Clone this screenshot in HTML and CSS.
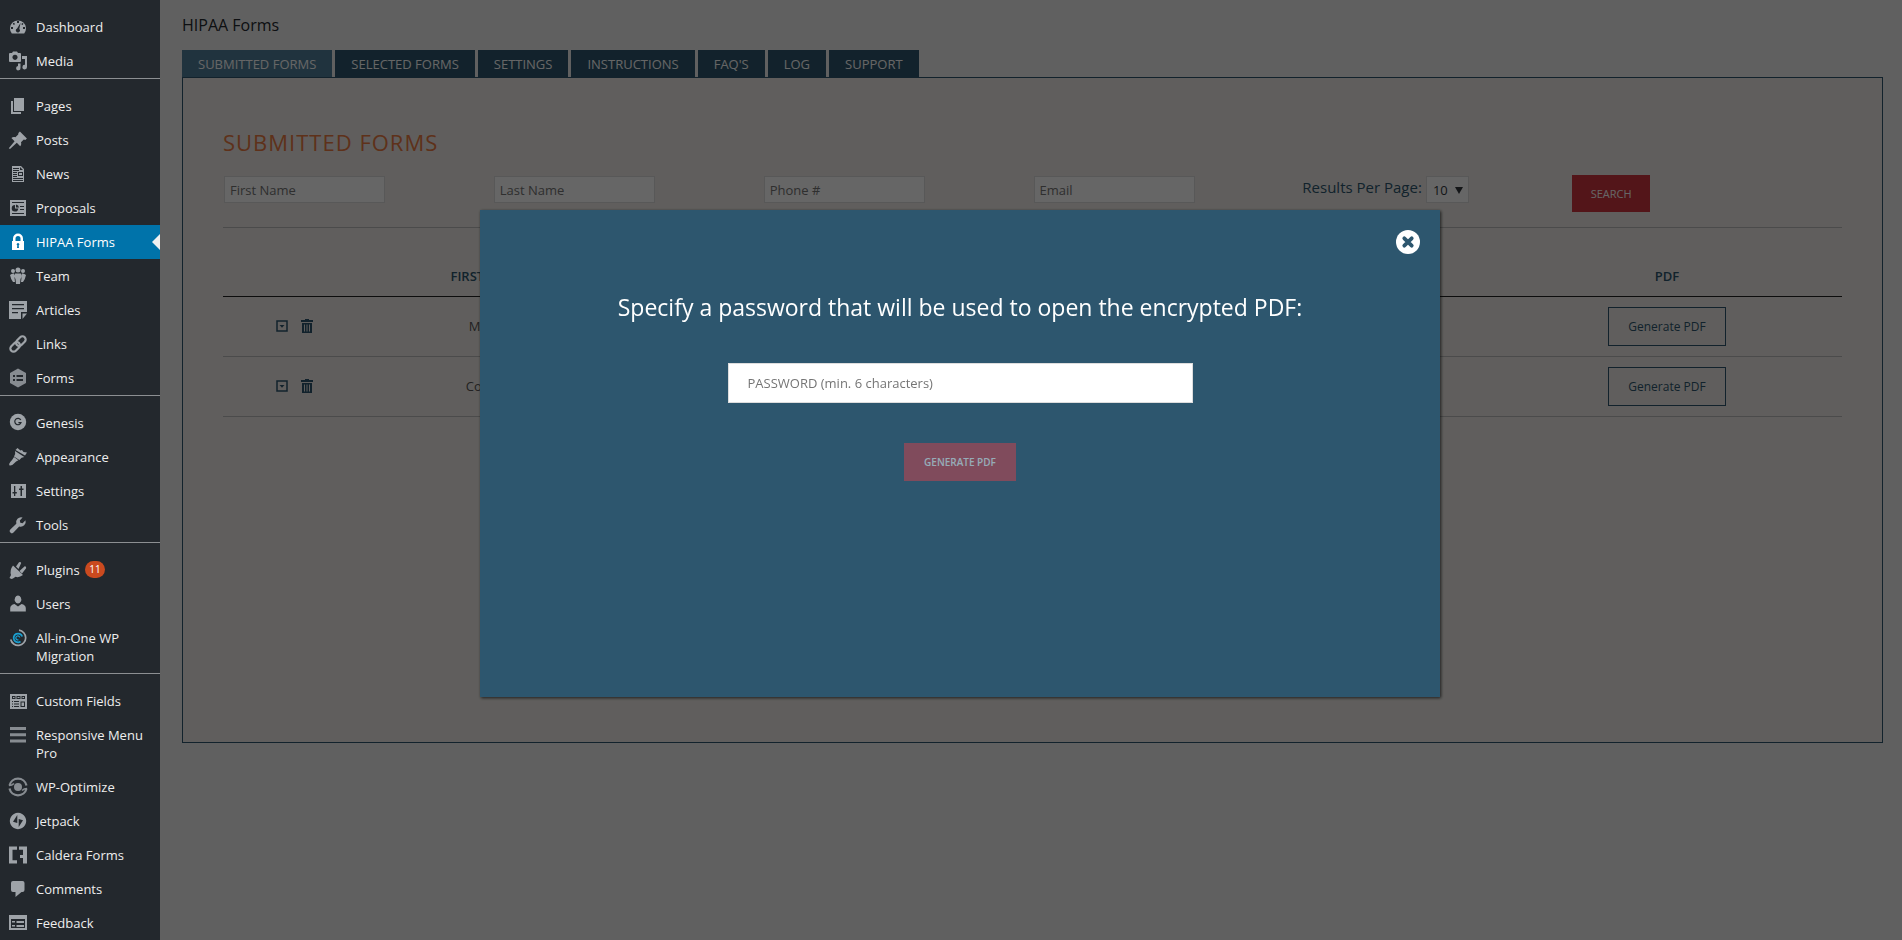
FILE: index.html
```
<!DOCTYPE html>
<html lang="en">
    <head>
        <title>HIPAA Forms</title>
        <meta charset="UTF-8">
        <meta name="viewport" content="width=device-width, initial-scale=1.0">
        <link rel="stylesheet" href="styles.css">
    </head>
    <body>
        <nav class="sidebar">
            <ul class="menu">
                <li><a href="#"><svg class="icon" viewBox="0 0 20 20"><path fill-rule="evenodd" d="M3.800 16.500h12.400A8 8 0 1 0 3.800 16.500zM9 4h2v2H9zM4.800 6.200l1.400-.4.800 1.400-1.400.8zM3 10h2v2H3zM15 10h2v2h-2zM14 6l1.400.6-.6 1.400-1.400-.6zM12.600 5.800L11.300 12a2 2 0 1 1-2.200-.4z"/></svg>Dashboard</a></li>
                <li><a href="#"><svg class="icon" viewBox="0 0 20 20"><path fill-rule="evenodd" d="M2 2h2l1-1.500h4L10 2h2q1 0 1 1v7q0 1-1 1H2q-1 0-1-1V3q0-1 1-1zM7 3.700a2.600 2.600 0 1 0 .01 0z"/><path d="M14 5h5v11a2.300 2.300 0 1 1-2-2.200V8h-3zM10 12.500h2.500v4.500a2.200 2.200 0 1 1-2.500-2z"/></svg>Media</a></li>
                <li class="separator"></li>
                <li><a href="#"><svg class="icon" viewBox="0 0 20 20"><path d="M6 2h10v13H6z"/><path d="M3 5h2v11h8v2H3z"/></svg>Pages</a></li>
                <li><a href="#"><svg class="icon" viewBox="0 0 20 20"><path d="M10.400 3l1.500-1.600 7 7-1.600 1.500-1.500-.4-2.800 2.800c.5 1.600.2 3-.8 4l-3.400-3.500L2 19l-1.200-.8 5.800-7L3.400 8c1-1 2.500-1.300 4-.8l2.800-2.800z"/></svg>Posts</a></li>
                <li><a href="#"><svg class="icon" viewBox="0 0 20 20"><path fill-rule="evenodd" d="M4 2h9l3 3v13H4zM5 4v1h6V4zM5 6v1h6V6zM12 3v3h3zM5 8v1h4V8zM10 8v4h5V8zM11 9h3v2h-3zM5 10v1h4v-1zM5 12v1h4v-1zM5 14v1h10v-1zM5 16v1h10v-1z"/></svg>News</a></li>
                <li><a href="#"><svg class="icon" viewBox="0 0 20 20"><path fill-rule="evenodd" d="M2 2h16v16H2zM4 4v1h12V4zM7 7a3.300 3.300 0 1 0 3.300 3.500H7zM8 6.500v3h3q-.3-2.700-3-3zM12 8v1h4V8zM12 11v1h4v-1zM4 15v1h12v-1z"/></svg>Proposals</a></li>
                <li class="current"><a href="#"><svg class="icon" viewBox="0 0 20 20"><path fill-rule="evenodd" d="M5 9V6.500a5 5 0 0 1 10 0V9h1v9H4V9zM7.500 9h5V6.500a2.500 2.500 0 0 0-5 0zM9.300 13.500L9 16h2l-.3-2.500a1.300 1.300 0 1 0-1.400 0z"/></svg>HIPAA Forms</a></li>
                <li><a href="#"><svg class="icon" viewBox="0 0 20 20"><circle cx="5" cy="5" r="2"/><circle cx="10" cy="4" r="2.500"/><circle cx="15" cy="5" r="2"/><path d="M2 9q2-2 4-1.500L7 16H5q-2-2-3-7zM18 9q-2-2-4-1.500L13 16h2q2-2 3-7zM7 7.500h6L14 10l-1.500 3-.5 5H8l-.5-5L6 10z"/></svg>Team</a></li>
                <li><a href="#"><svg class="icon" viewBox="0 0 20 20"><path fill-rule="evenodd" d="M1 1h18v11h-6v7H1zM4 4v1.300h12V4zM4 8v1.300h12V8zM4 12v1.300h6V12z"/><path d="M14.500 13.500H19L14.500 19z"/></svg>Articles</a></li>
                <li><a href="#"><svg class="icon" viewBox="0 0 20 20"><g transform="rotate(-45 10 10)" fill="none" stroke="#9ea3a8" stroke-width="2.200"><rect x="0.500" y="6.800" width="11" height="6.400" rx="3.200"/><rect x="8.500" y="6.800" width="11" height="6.400" rx="3.200"/></g></svg>Links</a></li>
                <li><a href="#"><svg class="icon dim" viewBox="0 0 20 20"><path fill-rule="evenodd" d="M10 .5l8 4.600v9.800l-8 4.600-8-4.600V5.100zM5 7v2h2V7zM8.500 7v2H15V7zM5 11v2h2v-2zM8.500 11v2H15v-2z"/></svg>Forms</a></li>
                <li class="separator"></li>
                <li><a href="#"><svg class="icon" viewBox="0 0 20 20"><circle cx="10" cy="9" r="8.200"/><path d="M12.800 7A3.200 3.200 0 1 0 13 9.600h-2.600" fill="none" stroke="#23282d" stroke-width="1.200"/></svg>Genesis</a></li>
                <li><a href="#"><svg class="icon" viewBox="0 0 20 20"><path d="M9.500 1l3 2.500 1.500-.6 1.500 2 3.500.6-2 3-9.500-5.500zM7 4l9.300 6q-2.900.2-5 3L6 9.500q1.800-2.600 1-5.500zM6 10l4.400 3.200Q8 14 6 16.500T1.500 18.500q-1.200-1.500.8-3.500T6 10z"/></svg>Appearance</a></li>
                <li><a href="#"><svg class="icon" viewBox="0 0 20 20"><path fill-rule="evenodd" d="M3 3h15v14H3zM6 5v6H4.500v1.500H6V15h1.300v-2.500h1.500V11H7.300V5zM12.500 5v2.500H11V9h1.500v6H14V9h1.500V7.500H14V5z"/></svg>Settings</a></li>
                <li><a href="#"><svg class="icon" viewBox="0 0 20 20"><path d="M17.500 5.300a5 5 0 0 1-6.300 6.200L5.500 17.600a2.200 2.200 0 0 1-3.200-3.200l6-5.600A5 5 0 0 1 14.600 2.500l-2.800 3 .5 2.200 2.300.5z"/></svg>Tools</a></li>
                <li class="separator"></li>
                <li><a href="#"><svg class="icon" viewBox="0 0 20 20"><path d="M5 5.500L15 15q-4 3-7.500 1.800L5 18.500 3.500 19l-2-1L3 15q-1.500-5 2-9.500zM8 6.500l3-4.200q1.600-1 2.200.8l-2.700 6zM11.500 11l5.200-4.800q2 0 1.400 2L14 13.500z"/></svg>Plugins <span class="badge">11</span></a></li>
                <li><a href="#"><svg class="icon" viewBox="0 0 20 20"><path d="M10 1.500a3.300 4 0 1 1-.01 0zM6.500 10L10 12.500l3.500-2.500q4 .8 4.300 4v3.500H2.200V14q.3-3.200 4.300-4z"/></svg>Users</a></li>
                <li><a href="#"><svg class="icon" viewBox="0 0 20 20"><path d="M11 2.200a7.600 7.600 0 1 1-8.300 9.300" fill="none" stroke="#9ea3a8" stroke-width="1.700"/><path d="M12.500 13.600A4.400 4.400 0 1 1 14.200 8.500" fill="none" stroke="#1a9fd0" stroke-width="1.800"/><path d="M10.500 11.800a2 2 0 1 1 1.300-2.300" fill="none" stroke="#1a9fd0" stroke-width="1.200"/></svg>All-in-One WP Migration</a></li>
                <li class="separator"></li>
                <li><a href="#"><svg class="icon" viewBox="0 0 20 20"><path fill-rule="evenodd" d="M2 3h17v15H2zM4 5v3h3.500V5zM8.500 5v3h4V5zM13.500 5v3H17V5zM5 6h1.500v1H5zM9.500 6h2v1h-2zM14.500 6H16v1h-1.500zM4 10v1h1v-1zM6 10v1h5v-1zM4 12.500v1h1v-1zM6 12.500v1h5v-1zM4 15v1h1v-1zM6 15v1h5v-1zM12.500 10.500V16H17v-5.500zM13.500 11.500H16V15h-2.500z"/></svg>Custom Fields</a></li>
                <li><a href="#"><svg class="icon dim" viewBox="0 0 20 20"><path d="M2 2h16v3H2zM2 8.200h16v3H2zM2 14.400h16v3H2z"/></svg>Responsive Menu Pro</a></li>
                <li><a href="#"><svg class="icon dim" viewBox="0 0 20 20"><circle cx="10" cy="10" r="4"/><path d="M1.500 8.500a8.700 8.700 0 0 1 17 0M1.500 11.500a8.700 8.700 0 0 0 17 0" fill="none" stroke="#878c91" stroke-width="2.200"/><path d="M1 8.500q3 0 5-2M19 11.500q-3 0-5 2" fill="none" stroke="#878c91" stroke-width="1.500"/></svg>WP-Optimize</a></li>
                <li><a href="#"><svg class="icon" viewBox="0 0 20 20"><path fill-rule="evenodd" d="M10 1.800a8.200 8.200 0 1 0 .01 0zM9.300 4v8L5 10.800zM10.700 16V8L15 9.200z"/></svg>Jetpack</a></li>
                <li><a href="#"><svg class="icon" viewBox="0 0 20 20"><path d="M1 1.500h8v3.300H4.500v10.400H9v3.300H1zM11 1.500h8v17h-4V13h-3v-3h3V4.800h-4z"/></svg>Caldera Forms</a></li>
                <li><a href="#"><svg class="icon" viewBox="0 0 20 20"><path d="M5 2h9.500q2 0 2 2v7q0 2-2 2h-1L7.500 18v-5H5q-2 0-2-2V4q0-2 2-2z"/></svg>Comments</a></li>
                <li><a href="#"><svg class="icon" viewBox="0 0 20 20"><path fill-rule="evenodd" d="M1 2h18v15H1zM3 6v9h14V6zM4 8h3v1.500H4zM8.500 8H16v2H8.500zM4 12h3v1.500H4zM8.500 12H16v2H8.500z"/></svg>Feedback</a></li>
            </ul>
        </nav>

        <main class="content">
            <h1>HIPAA Forms</h1>
            <div class="tabs">
                <button type="button" class="tab active">SUBMITTED FORMS</button>
                <button type="button" class="tab">SELECTED FORMS</button>
                <button type="button" class="tab">SETTINGS</button>
                <button type="button" class="tab">INSTRUCTIONS</button>
                <button type="button" class="tab">FAQ'S</button>
                <button type="button" class="tab">LOG</button>
                <button type="button" class="tab">SUPPORT</button>
            </div>
            <section class="panel">
                <h2>SUBMITTED FORMS</h2>
                <form class="filters">
                    <input type="text" placeholder="First Name" aria-label="First Name">
                    <input type="text" placeholder="Last Name" aria-label="Last Name">
                    <input type="text" placeholder="Phone #" aria-label="Phone #">
                    <input type="text" placeholder="Email" aria-label="Email">
                    <div class="per-page">
                        <label for="perPage">Results Per Page:</label>
                        <div class="select">
                            <select id="perPage">
                                <option>10</option>
                            </select>
                        </div>
                    </div>
                    <button type="button" class="search">SEARCH</button>
                </form>
                <table>
                    <thead>
                        <tr>
                            <th class="actions"></th>
                            <th class="name">FIRST NAME</th>
                            <th></th>
                            <th class="pdf">PDF</th>
                        </tr>
                    </thead>
                    <tbody>
                        <tr>
                            <td>
                                <div class="row-icons">
                                    <button type="button" class="icon-button" aria-label="Expand"><svg viewBox="0 0 14 14"><path d="M2 2h10v10H2z" fill="none" stroke="#2d566e" stroke-width="1.500"/><path d="M4.500 6h5L7 8.700z"/></svg></button>
                                    <button type="button" class="icon-button" aria-label="Delete"><svg viewBox="0 0 14 14"><path fill-rule="evenodd" d="M5 0h4v1h4v2H1V1h4zM2 4h10v10H2zM4 5.500v7h1v-7zM6.500 5.500v7h1v-7zM9 5.500v7h1v-7z"/></svg></button>
                                </div>
                            </td>
                            <td>Marco</td>
                            <td></td>
                            <td><button type="button" class="generate">Generate PDF</button></td>
                        </tr>
                        <tr>
                            <td>
                                <div class="row-icons">
                                    <button type="button" class="icon-button" aria-label="Expand"><svg viewBox="0 0 14 14"><path d="M2 2h10v10H2z" fill="none" stroke="#2d566e" stroke-width="1.500"/><path d="M4.500 6h5L7 8.700z"/></svg></button>
                                    <button type="button" class="icon-button" aria-label="Delete"><svg viewBox="0 0 14 14"><path fill-rule="evenodd" d="M5 0h4v1h4v2H1V1h4zM2 4h10v10H2zM4 5.500v7h1v-7zM6.500 5.500v7h1v-7zM9 5.500v7h1v-7z"/></svg></button>
                                </div>
                            </td>
                            <td>Conrad</td>
                            <td></td>
                            <td><button type="button" class="generate">Generate PDF</button></td>
                        </tr>
                    </tbody>
                </table>
            </section>
        </main>

        <div class="overlay">
            <div class="modal" role="dialog" aria-labelledby="modalTitle">
                <button type="button" class="close" aria-label="Close"><svg viewBox="0 0 24 24"><circle cx="12" cy="12" r="12" fill="#fff"/><path d="M8.300 8.300l7.400 7.400M15.700 8.300l-7.400 7.400" stroke="#2d566e" stroke-width="3.800" stroke-linecap="round"/></svg></button>
                <h3 id="modalTitle">Specify a password that will be used to open the encrypted PDF:</h3>
                <input type="password" placeholder="PASSWORD (min. 6 characters)" aria-label="Password">
                <button type="button" class="submit">GENERATE PDF</button>
            </div>
        </div>
    </body>
</html>
```
FILE: styles.css
```
* {
    box-sizing: border-box;
}
body {
    display: flex;
    min-height: 100vh;
    margin: 0;
    background-color: #f1f1f1;
    color: #2d566e;
    font-family: "Segoe UI", "Open Sans", sans-serif;
    font-size: 13px;
}
button, input, select {
    font-family: inherit;
    margin: 0;
}
button {
    cursor: pointer;
}

/* sidebar stays above the overlay */
.sidebar {
    position: relative;
    z-index: 20;
    flex: 0 0 160px;
    background-color: #23282d;
}
.menu {
    list-style: none;
    margin: 0;
    padding: 10px 0 0;
}
.menu li {
    position: relative;
}
.menu a {
    display: block;
    padding: 8px 8px 8px 36px;
    color: #eee;
    line-height: 18px;
    text-decoration: none;
}
.menu .icon {
    position: absolute;
    left: 8px;
    top: 7px;
    width: 20px;
    height: 20px;
    fill: #9ea3a8;
}
.menu .dim {
    fill: #878c91;
}
.menu .separator {
    height: 11px;
    border-top: 1px solid #8c8f92;
}
.menu .current a {
    background-color: #0073aa;
    color: #fff;
}
.menu .current .icon {
    fill: #fff;
}
.menu .current::after {
    content: "";
    position: absolute;
    right: 0;
    top: 9px;
    border: 8px solid transparent;
    border-left: none;
    border-right-color: #f1f1f1;
}
.badge {
    display: inline-block;
    min-width: 20px;
    margin-left: 2px;
    border-radius: 9px;
    background-color: #ca4a1f;
    color: #fff;
    font-size: 10px;
    line-height: 17px;
    text-align: center;
    vertical-align: top;
}

.content {
    flex: 1;
    padding: 14px 19px 0 22px;
}
h1 {
    margin: 0 0 14px;
    color: #23282d;
    font-size: 16px;
    font-weight: 500;
    line-height: 22px;
}
.tabs {
    display: flex;
    gap: 3px;
}
.tab {
    height: 27px;
    padding: 0 16px;
    border: none;
    background-color: #2d566e;
    color: #fff;
    font-size: 13px;
}
.tab.active {
    background-color: #52809b;
}
.panel {
    min-height: 666px;
    padding: 49px 40px 40px;
    border: 1px solid #2d566e;
    background-color: #efece8;
}
h2 {
    margin: 0;
    color: #ec7a42;
    font-size: 22px;
    font-weight: 400;
    letter-spacing: 1px;
    line-height: 30px;
}
.filters {
    display: grid;
    grid-template-columns: repeat(6, 1fr);
    align-items: start;
    margin-top: 18px;
    padding-bottom: 15px;
    border-bottom: 1px solid #bbb;
}
.filters input {
    width: 161px;
    height: 27px;
    margin: 1px;
    padding: 0 5px;
    border: 1px solid #ddd;
    background-color: #fff;
    font-size: 13px;
}
.filters input::placeholder {
    color: #757575;
}
.per-page {
    display: flex;
    gap: 4px;
    font-size: 15px;
    line-height: 24px;
}
.select {
    position: relative;
    margin-top: 1px;
}
.select::after {
    content: "";
    position: absolute;
    right: 6px;
    top: 11px;
    border: 4px solid transparent;
    border-top: 7px solid #32373c;
    border-bottom: none;
}
.per-page select {
    display: block;
    appearance: none;
    width: 43px;
    height: 27px;
    padding: 0 6px;
    border: 1px solid #ddd;
    border-radius: 0;
    background-color: #fff;
    color: #32373c;
    font-size: 13px;
}
.search {
    justify-self: start;
    width: 78px;
    height: 37px;
    border: none;
    background-color: #cf3640;
    color: #fff;
    font-size: 11px;
}

table {
    width: 100%;
    margin-top: 28px;
    border-collapse: collapse;
    table-layout: fixed;
    text-align: center;
}
th {
    height: 40px;
    padding: 0;
    border-bottom: 1px solid #222;
    font-size: 13px;
    font-weight: 600;
}
.actions {
    width: 142px;
}
.name {
    width: 246px;
}
.pdf {
    width: 350px;
}
td {
    height: 60px;
    padding: 0;
    border-bottom: 1px solid #bbb;
    color: #555;
}
.row-icons {
    display: flex;
    justify-content: center;
    gap: 11px;
}
.icon-button {
    width: 14px;
    height: 14px;
    padding: 0;
    border: none;
    background: none;
}
.icon-button svg {
    display: block;
    fill: #2d566e;
}
.generate {
    width: 118px;
    height: 39px;
    border: 1px solid #2d566e;
    background: none;
    color: #2d566e;
    font-size: 12px;
}

.overlay {
    position: fixed;
    inset: 0;
    z-index: 10;
    display: flex;
    justify-content: center;
    align-items: flex-start;
    padding: 210px 0 0 18px;
    background-color: rgba(0, 0, 0, 0.6);
}
.modal {
    position: relative;
    display: flex;
    flex-direction: column;
    align-items: center;
    width: 960px;
    max-width: 100%;
    min-height: 487px;
    padding-top: 80px;
    background-color: #2d566e;
    box-shadow: 1px 1px 3px rgba(0, 0, 0, 0.7);
}
.close {
    position: absolute;
    top: 20px;
    right: 20px;
    width: 24px;
    height: 24px;
    padding: 0;
    border: none;
    background: none;
}
.close svg {
    display: block;
}
.modal h3 {
    margin: 0;
    color: #fff;
    font-size: 23px;
    font-weight: 400;
    line-height: 34px;
}
.modal input {
    width: 465px;
    height: 40px;
    margin: 39px 0 40px;
    padding: 0 19px;
    border: 1px solid #ddd;
    font-size: 13px;
}
.modal input::placeholder {
    color: #757575;
}
.submit {
    width: 112px;
    height: 38px;
    border: none;
    background-color: #d3404a;
    color: #fff;
    font-size: 10px;
    font-weight: 600;
    opacity: 0.5;
}
```
